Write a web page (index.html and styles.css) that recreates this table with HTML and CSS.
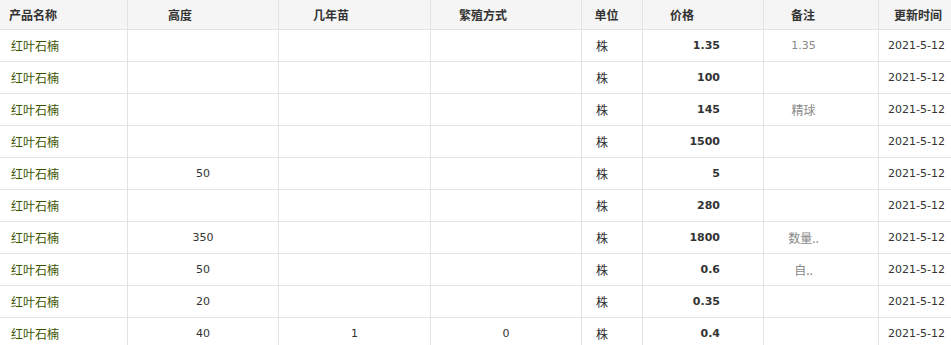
FILE: index.html
```html
<!DOCTYPE html>
<html lang="zh-CN">
<head>
<meta charset="utf-8">
<title>产品价格</title>
<link rel="stylesheet" href="styles.css">
</head>
<body>
<div class="table">
  <div class="row head">
    <div class="c c1">产品名称</div>
    <div class="c c2">高度</div>
    <div class="c c3">几年苗</div>
    <div class="c c4">繁殖方式</div>
    <div class="c c5">单位</div>
    <div class="c c6">价格</div>
    <div class="c c7">备注</div>
    <div class="c c8">更新时间</div>
  </div>
  <div class="row">
    <div class="c c1 name">红叶石楠</div><div class="c c2 num"></div><div class="c c3 num"></div><div class="c c4 num"></div><div class="c c5">株</div><div class="c c6 price">1.35</div><div class="c c7 note num">1.35</div><div class="c c8 num">2021-5-12</div>
  </div>
  <div class="row">
    <div class="c c1 name">红叶石楠</div><div class="c c2 num"></div><div class="c c3 num"></div><div class="c c4 num"></div><div class="c c5">株</div><div class="c c6 price">100</div><div class="c c7 note"></div><div class="c c8 num">2021-5-12</div>
  </div>
  <div class="row">
    <div class="c c1 name">红叶石楠</div><div class="c c2 num"></div><div class="c c3 num"></div><div class="c c4 num"></div><div class="c c5">株</div><div class="c c6 price">145</div><div class="c c7 note">精球</div><div class="c c8 num">2021-5-12</div>
  </div>
  <div class="row">
    <div class="c c1 name">红叶石楠</div><div class="c c2 num"></div><div class="c c3 num"></div><div class="c c4 num"></div><div class="c c5">株</div><div class="c c6 price">1500</div><div class="c c7 note"></div><div class="c c8 num">2021-5-12</div>
  </div>
  <div class="row">
    <div class="c c1 name">红叶石楠</div><div class="c c2 num">50</div><div class="c c3 num"></div><div class="c c4 num"></div><div class="c c5">株</div><div class="c c6 price">5</div><div class="c c7 note"></div><div class="c c8 num">2021-5-12</div>
  </div>
  <div class="row">
    <div class="c c1 name">红叶石楠</div><div class="c c2 num"></div><div class="c c3 num"></div><div class="c c4 num"></div><div class="c c5">株</div><div class="c c6 price">280</div><div class="c c7 note"></div><div class="c c8 num">2021-5-12</div>
  </div>
  <div class="row">
    <div class="c c1 name">红叶石楠</div><div class="c c2 num">350</div><div class="c c3 num"></div><div class="c c4 num"></div><div class="c c5">株</div><div class="c c6 price">1800</div><div class="c c7 note">数量..</div><div class="c c8 num">2021-5-12</div>
  </div>
  <div class="row">
    <div class="c c1 name">红叶石楠</div><div class="c c2 num">50</div><div class="c c3 num"></div><div class="c c4 num"></div><div class="c c5">株</div><div class="c c6 price">0.6</div><div class="c c7 note">自..</div><div class="c c8 num">2021-5-12</div>
  </div>
  <div class="row">
    <div class="c c1 name">红叶石楠</div><div class="c c2 num">20</div><div class="c c3 num"></div><div class="c c4 num"></div><div class="c c5">株</div><div class="c c6 price">0.35</div><div class="c c7 note"></div><div class="c c8 num">2021-5-12</div>
  </div>
  <div class="row">
    <div class="c c1 name">红叶石楠</div><div class="c c2 num">40</div><div class="c c3 num">1</div><div class="c c4 num">0</div><div class="c c5">株</div><div class="c c6 price">0.4</div><div class="c c7 note"></div><div class="c c8 num">2021-5-12</div>
  </div>
</div>
</body>
</html>
```
FILE: styles.css
```css
* { box-sizing: border-box; }
html, body { margin: 0; padding: 0; background: #fff; }
body {
  font-family: "Noto Sans CJK SC", "DejaVu Sans", sans-serif;
  font-size: 12px;
  color: #333;
  overflow: hidden;
}
.table { width: 951px; }
.row {
  display: grid;
  grid-template-columns: 128px 151px 152px 151px 61px 121px 115px 72px;
  height: 32px;
  border-bottom: 1px solid #e3e3e3;
}
.row.head {
  height: 30px;
  background: #f5f5f5;
  font-weight: bold;
}
.c {
  display: flex;
  align-items: center;
  border-right: 1px solid #e3e3e3;
  white-space: nowrap;
  line-height: 14px;
  overflow: hidden;
}
.c8 { border-right: none; }

/* header positions */
.head .c { justify-content: flex-start; padding-top: 1px; }
.head .c1 { padding-left: 9px; }
.head .c2 { padding-left: 40px; }
.head .c3 { padding-left: 34px; }
.head .c4 { padding-left: 28px; }
.head .c5 { padding-left: 9px; }
.head .c6 { padding-left: 27px; }
.head .c7 { padding-left: 27px; }
.head .c8 { padding-left: 15px; }

/* body cells */
.num, .price {
  font-family: "DejaVu Sans", sans-serif;
  font-size: 11px;
}
.name { color: #3c5500; padding-left: 11px; }
.c2, .c3, .c4 { justify-content: center; }
.row .c5 { justify-content: center; padding-right: 20px; }
.price {
  justify-content: flex-end;
  padding-right: 43px;
  font-weight: bold;
  color: #333;
}
.note {
  justify-content: center;
  padding-right: 35px;
  color: #888;
}
.c8.num { padding-left: 9px; }
```
